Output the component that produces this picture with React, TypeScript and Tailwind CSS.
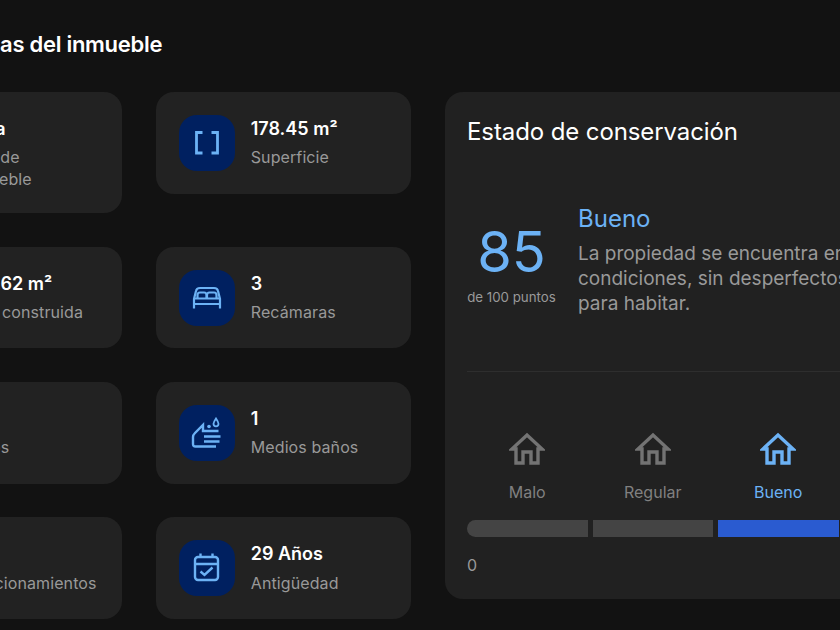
const FONT = "font-['Inter','Liberation_Sans',sans-serif]";

function SquareIcon() {
  return (
    <svg viewBox="0 0 32 32" className="w-8 h-8" fill="none" stroke="#6cb2f5" strokeWidth="2.8">
      <path d="M11.5 5.5H5.5V26H11.5" />
      <path d="M20.5 5.5H26.5V26H20.5" />
    </svg>
  );
}

function BedIcon() {
  return (
    <svg viewBox="0 0 32 32" className="w-8 h-8" fill="none" stroke="#6cb2f5" strokeWidth="2.2">
      <path d="M3 26.5V17L5 9Q5.5 6 9 6H23Q26.5 6 27 9L29 17V26.5" />
      <path d="M3 16.5H29M3 22H29" />
      <path d="M6.5 16V13Q6.5 10.5 9 10.5H13Q15.5 10.5 15.5 13V16" />
      <path d="M16 16V13Q16 10.5 18.5 10.5H23Q25.5 10.5 25.5 13V16" />
    </svg>
  );
}

function HandIcon() {
  return (
    <svg viewBox="0 0 32 32" className="w-8 h-8" fill="none" stroke="#6cb2f5" strokeWidth="2.4">
      <path d="M25 29.5H4.5Q2 29.5 2 27V20Q2 18 4 16L12 8V14H27.5" />
      <path d="M13 19.5H29.5M13 24.5H28.5" />
      <path d="M25 1.5C23 4.5 22.5 5.5 22.5 6.8A2.5 2.5 0 0 0 27.5 6.8C27.5 5.5 27 4.5 25 1.5Z" strokeWidth="1.8" />
      <circle cx="18" cy="9.5" r="1.8" fill="#6cb2f5" stroke="none" />
    </svg>
  );
}

function CalendarIcon() {
  return (
    <svg viewBox="0 0 32 32" className="w-8 h-8" fill="none" stroke="#6cb2f5" strokeWidth="2.4">
      <rect x="4" y="5" width="23" height="23" rx="3" />
      <path d="M4 12H27M9.5 1.5V5M21.5 1.5V5" />
      <path d="M9.5 19.5L13.5 23L21.5 15.5" />
    </svg>
  );
}

function House({ active }: { active?: boolean }) {
  return (
    <svg viewBox="0 0 36 33" className="w-9 h-[33px]" fill="none" stroke={active ? "#6cb2f5" : "#737373"} strokeWidth="3.4">
      <path d="M7 31V17H3L18 3L33 17H29V31H22V20H14V31Z" />
    </svg>
  );
}

const CARDS = [
  { value: "Casa", label: "Tipo de inmueble", icon: <SquareIcon /> },
  { value: "178.45 m²", label: "Superficie", icon: <SquareIcon /> },
  { value: "256.62 m²", label: "Área construida", icon: <BedIcon /> },
  { value: "3", label: "Recámaras", icon: <BedIcon /> },
  { value: "2", label: "Baños", icon: <HandIcon /> },
  { value: "1", label: "Medios baños", icon: <HandIcon /> },
  { value: "2", label: "Estacionamientos", icon: <CalendarIcon /> },
  { value: "29 Años", label: "Antigüedad", icon: <CalendarIcon /> },
];

const LEVELS = [
  { name: "Malo", color: "text-[#808080]" },
  { name: "Regular", color: "text-[#808080]" },
  { name: "Bueno", color: "text-[#6cb2f5]", active: true },
  { name: "Excelente", color: "text-[#808080]" },
];

export default function App() {
  return (
    <div className={`w-[840px] h-[630px] overflow-hidden bg-[#121212] ${FONT}`}>
      <div className="w-[1119px] -ml-[133px] pt-[30px]">
        <h2 className="text-[22px] leading-7 font-semibold text-white tracking-[-0.28px] whitespace-nowrap">
          Características del inmueble
        </h2>
        <div className="flex items-start gap-[34px] mt-[34px]">
          <div className="grid grid-cols-[255px_255px] items-start gap-x-[34px] gap-y-[33.75px]">
            {CARDS.map((c) => (
              <div key={c.label} className="flex gap-4 bg-[#222222] rounded-[18px] p-[22.75px]">
                <div className="w-14 h-14 shrink-0 rounded-[18px] bg-[#002060] flex items-center justify-center">
                  {c.icon}
                </div>
                <div className="min-w-0 pt-px">
                  <p className="text-[18px] leading-[26px] font-semibold text-white whitespace-nowrap">{c.value}</p>
                  <p className="text-[16px] leading-[22px] tracking-[0.1px] mt-[4.5px] text-[#999999] w-[100px]">
                    {c.label === "Tipo de inmueble" ? c.label : <span className="whitespace-nowrap">{c.label}</span>}
                  </p>
                </div>
              </div>
            ))}
          </div>
          <section className="w-[541px] h-[507px] bg-[#212121] rounded-[18px] px-[22px] pt-6">
            <h3 className="text-[24px] leading-8 tracking-[-0.1px] text-white whitespace-nowrap">Estado de conservación</h3>
            <div className="flex gap-[22px] mt-[55px] h-[126px]">
              <div className="w-[89px] shrink-0 flex flex-col items-center pt-[19px]">
                <span className="text-[56px] leading-[60px] text-[#6cb2f5]">85</span>
                <span className="text-[13.3px] leading-5 mt-[5px] text-[#999999] whitespace-nowrap">de 100 puntos</span>
              </div>
              <div>
                <p className="text-[24px] leading-8 text-[#6cb2f5]">Bueno</p>
                <p className="text-[19px] leading-[25px] text-[#999999] mt-[6px] whitespace-nowrap">
                  La propiedad se encuentra en buenas
                  <br />
                  condiciones, sin desperfectos visibles y lista
                  <br />
                  para habitar.
                </p>
              </div>
            </div>
            <div className="h-px bg-[#2e2e2e] mt-[42px]" />
            <div className="grid grid-cols-4 gap-[5px] mt-[60px]">
              {LEVELS.map((l) => (
                <div key={l.name} className="flex flex-col items-center gap-[15px]">
                  <House active={l.active} />
                  <span className={`text-[16px] leading-6 ${l.color}`}>{l.name}</span>
                </div>
              ))}
            </div>
            <div className="grid grid-cols-4 gap-[5px] mt-4">
              <div className="h-[17px] bg-[#444444] rounded-l-full" />
              <div className="h-[17px] bg-[#444444]" />
              <div className="h-[17px] bg-[#2a5bd0]" />
              <div className="h-[17px] bg-[#444444] rounded-r-full" />
            </div>
            <p className="text-[16px] leading-6 text-[#999999] mt-4">0</p>
          </section>
        </div>
      </div>
    </div>
  );
}
